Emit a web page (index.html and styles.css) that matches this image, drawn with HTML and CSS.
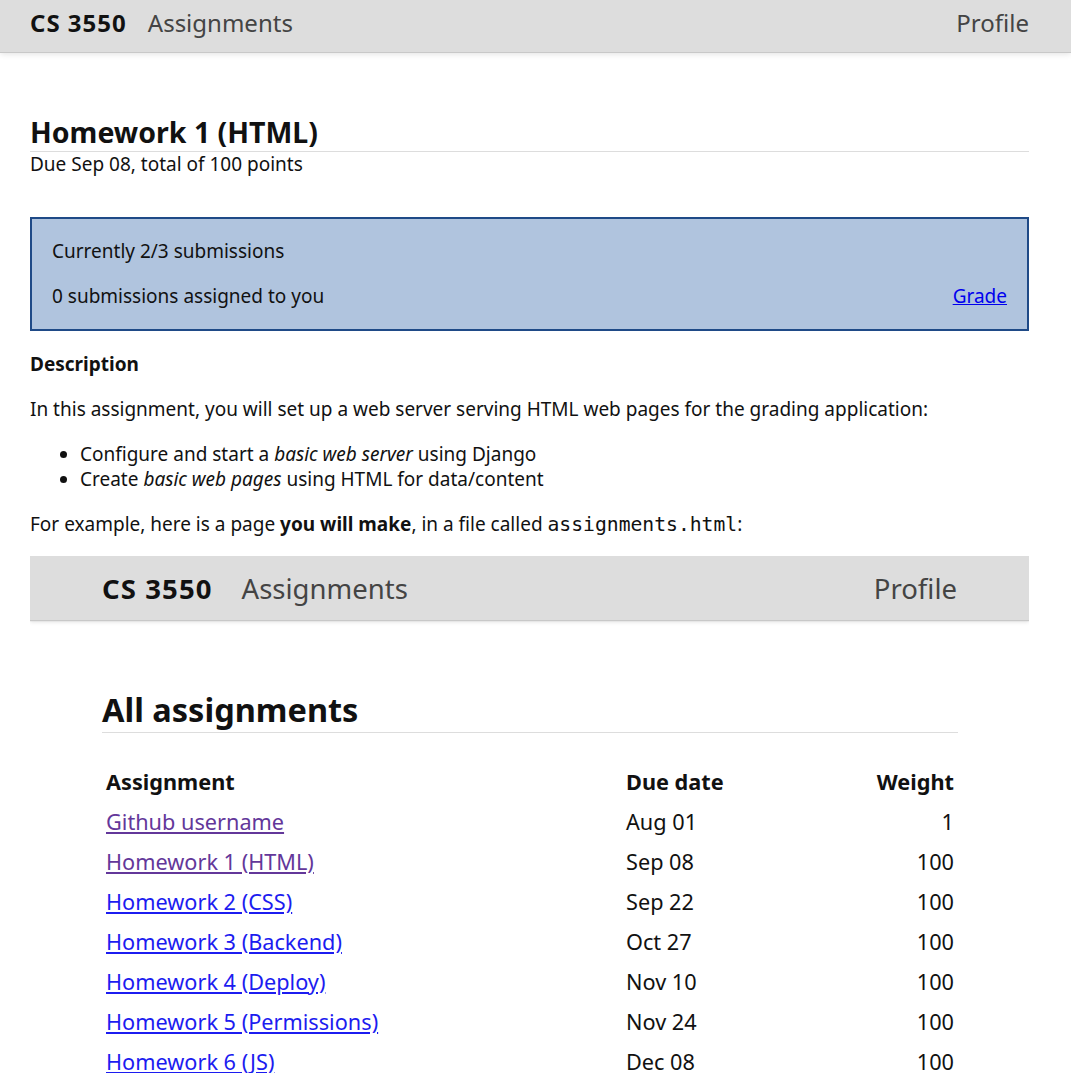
FILE: index.html
```html
<!DOCTYPE html>
<html lang="en">
<head>
<meta charset="utf-8">
<title>Homework 1 (HTML)</title>
<link rel="stylesheet" href="styles.css">
</head>
<body>
<header class="topbar">
  <a class="brand" href="#">CS 3550</a>
  <a class="nav-link" href="#">Assignments</a>
  <a class="nav-link profile" href="#">Profile</a>
</header>
<main class="page">
  <h1 class="title">Homework 1 (HTML)</h1>
  <p class="due">Due Sep 08, total of 100 points</p>

  <div class="status">
    <p>Currently 2/3 submissions</p>
    <p class="status-row"><span>0 submissions assigned to you</span><a href="#">Grade</a></p>
  </div>

  <h2 class="section">Description</h2>
  <p class="text">In this assignment, you will set up a web server serving HTML web pages for the grading application:</p>
  <ul class="list">
    <li>Configure and start a <em>basic web server</em> using Django</li>
    <li>Create <em>basic web pages</em> using HTML for data/content</li>
  </ul>
  <p class="text">For example, here is a page <strong>you will make</strong>, in a file called <code>assignments.html</code>:</p>

  <div class="example">
    <div class="ex-bar">
      <span class="ex-brand">CS 3550</span>
      <span class="ex-nav">Assignments</span>
      <span class="ex-nav ex-profile">Profile</span>
    </div>
    <div class="ex-body">
      <h2 class="ex-title">All assignments</h2>
      <table class="ex-table">
        <thead>
          <tr><th class="col-name">Assignment</th><th>Due date</th><th class="col-weight">Weight</th></tr>
        </thead>
        <tbody>
          <tr><td><span class="ex-link visited">Github username</span></td><td>Aug 01</td><td class="col-weight">1</td></tr>
          <tr><td><span class="ex-link visited">Homework 1 (HTML)</span></td><td>Sep 08</td><td class="col-weight">100</td></tr>
          <tr><td><span class="ex-link">Homework 2 (CSS)</span></td><td>Sep 22</td><td class="col-weight">100</td></tr>
          <tr><td><span class="ex-link">Homework 3 (Backend)</span></td><td>Oct 27</td><td class="col-weight">100</td></tr>
          <tr><td><span class="ex-link">Homework 4 (Deploy)</span></td><td>Nov 10</td><td class="col-weight">100</td></tr>
          <tr><td><span class="ex-link">Homework 5 (Permissions)</span></td><td>Nov 24</td><td class="col-weight">100</td></tr>
          <tr><td><span class="ex-link">Homework 6 (JS)</span></td><td>Dec 08</td><td class="col-weight">100</td></tr>
        </tbody>
      </table>
    </div>
  </div>
</main>
</body>
</html>
```
FILE: styles.css
```css
html, body {
  margin: 0;
  padding: 0;
  background: #fff;
}
body {
  font-family: "Noto Sans", "Open Sans", sans-serif;
  font-size: 19px;
  line-height: 25px;
  color: #111;
  overflow: hidden;
}

.topbar {
  height: 52px;
  box-sizing: border-box;
  display: flex;
  align-items: center;
  gap: 21px;
  padding: 0 42px 7px 30px;
  background: #dddddd;
  box-shadow: 0 1px 0 #c8c8c8, 0 2px 6px rgba(0, 0, 0, 0.12);
  font-size: 24px;
}
.topbar a { text-decoration: none; }
.brand { font-weight: 700; color: #111; letter-spacing: 1px; }
.nav-link { color: #444; }
.profile { margin-left: auto; }

.page {
  padding: 0 42px 0 30px;
}

.title {
  margin: 63px 0 0;
  font-size: 28.5px;
  line-height: 35px;
  padding-bottom: 1px;
  font-weight: 700;
  border-bottom: 1px solid #dddddd;
}
.due { margin: 0; }

.status {
  margin-top: 40px;
  border: 2px solid #1f4a87;
  background: #b0c4de;
  padding: 20px;
}
.status p { margin: 0; }
.status .status-row {
  margin-top: 20px;
  display: flex;
  justify-content: space-between;
}
.status a { color: #0000ee; }

.section {
  margin: 21px 0 0;
  font-size: 19px;
  line-height: 25px;
  font-weight: 700;
}
.text { margin: 20px 0 0; }
.list {
  margin: 20px 0 0;
  padding-left: 50px;
}
code {
  font-family: "DejaVu Sans Mono", "Liberation Mono", monospace;
  font-size: 19.7px;
}

.example {
  margin-top: 19px;
  height: 520px;
  overflow: hidden;
}
.ex-bar {
  height: 64px;
  display: flex;
  align-items: center;
  gap: 29px;
  padding: 0 72px;
  background: #dddddd;
  box-shadow: 0 1px 1px #c8c8c8, 0 2px 4px rgba(0, 0, 0, 0.12);
  font-size: 27.5px;
}
.ex-brand { font-weight: 700; color: #111; letter-spacing: 1.1px; }
.ex-nav { color: #444; }
.ex-profile { margin-left: auto; }

.ex-body {
  padding: 0 71px 0 72px;
}
.ex-title {
  margin: 70px 0 0;
  font-size: 32.5px;
  line-height: 40px;
  padding-bottom: 2px;
  font-weight: 700;
  border-bottom: 1px solid #dddddd;
}
.ex-table {
  margin-top: 28px;
  width: 100%;
  border-collapse: collapse;
  font-size: 21.7px;
}
.ex-table th, .ex-table td {
  height: 40px;
  padding: 0 4px;
  text-align: left;
}
.ex-table th { font-weight: 700; }
.ex-table .col-name { width: 512px; }
.ex-table .col-weight { text-align: right; width: 120px; }
.ex-link {
  color: #1c1cf0;
  text-decoration: underline;
}
.ex-link.visited { color: #63379a; }
```
